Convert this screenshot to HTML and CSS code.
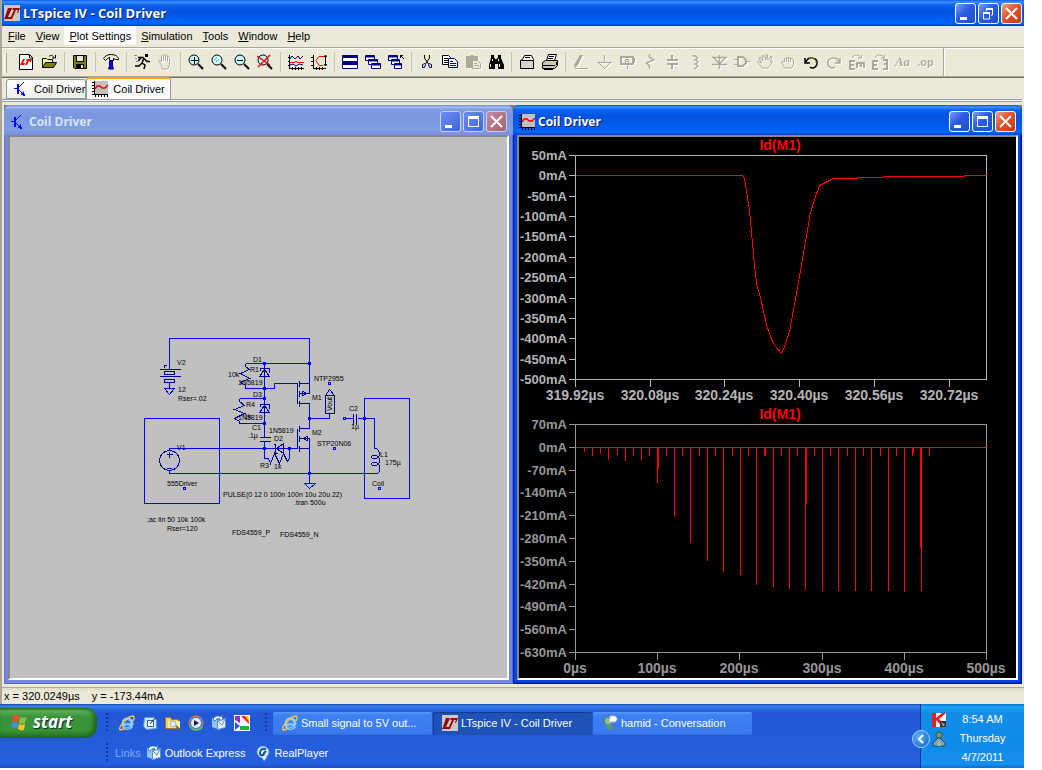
FILE: index.html
```html
<!DOCTYPE html>
<html lang="en">
<head>
    <meta charset="UTF-8">
    <meta name="viewport" content="width=device-width, initial-scale=1.0">
    <title>LTspice IV - Coil Driver</title>
    <link rel="stylesheet" href="styles.css">
</head>
<body>

    <!-- shared icons -->
    <svg class="defs" width="0" height="0">
        <symbol id="lt" viewBox="0 0 16 16">
            <path fill="#c8c8c8" d="M0 0h16v16H0z"/>
            <path fill="#900" d="M4 3h4L4 12h3l-1 2H0l1-2zM9 3h7l-2 5h-1l1-3h-2L8 14H6l4-9H8z"/>
        </symbol>
        <symbol id="bjt" viewBox="0 0 16 16">
            <path fill="none" stroke="#00f" d="M1 7.500h4M11 1L6 6M6 9l5 5"/>
            <path fill="#00f" d="M4 3h2v10H4zM8 13l3-3v4h-3zM10 13h2v2h-2z"/>
        </symbol>
        <symbol id="plot" viewBox="0 0 16 16">
            <path fill="#c0c0c0" d="M3 0h13v13H3z"/>
            <path stroke="#000" d="M2.500 0v14M2 13.500h14M0 1.500h2M0 4.500h2M0 7.500h2M0 10.500h2M0 13.500h2M3.500 14v2M6.500 14v2M9.500 14v2M12.500 14v2M15.500 14v2"/>
            <path fill="none" stroke="red" stroke-width="1.500" d="M3 8l2-3h3l2 2h3l3-3"/>
        </symbol>
        <symbol id="ie" viewBox="0 0 16 16">
            <path fill="none" stroke="#8fd0ff" stroke-width="3" d="M4 9h9c0-7-9-7-9 0 0 5 6 6 9 2"/>
            <path fill="none" stroke="#2a8be8" d="M5 8h7M5 11c2 3 5 3 7 1"/>
            <path fill="none" stroke="#f5c53a" stroke-width="1.500" d="M1 15C-1 12 8 1 14 1c2 1 1 3 0 5M1 15c2 0 4-1 5-2"/>
        </symbol>
        <symbol id="mail" viewBox="0 0 16 16">
            <path fill="#8ec5f5" d="M1 3l8 2v10l-8-3z"/>
            <path fill="#e8f3fd" stroke="#5b8fc8" d="M6.500 5.500l8-2v9l-8 2z"/>
            <path fill="none" stroke="#5b8fc8" d="M7 6l4 4 3-6"/>
            <path fill="#fff" stroke="#3d7bc4" d="M2 5c1-4 5-5 8-3l1-2 1 5H8l1-1c-2-1-4 0-5 2z"/>
        </symbol>
        <symbol id="win-min" viewBox="0 0 21 21"><path fill="#fff" d="M5 14h7v3H5z"/></symbol>
        <symbol id="win-max" viewBox="0 0 21 21"><path fill="#fff" d="M5 5h11v11H5zM6 8v7h9V8z" fill-rule="evenodd"/></symbol>
        <symbol id="win-restore" viewBox="0 0 21 21">
            <path fill="none" stroke="#fff" d="M8.500 8V6M8 6.500h7M14.500 6v6H13M5 10.500h7M5.500 9v7h6V9"/>
            <path fill="#fff" d="M8 5h7v2H8zM5 9h7v2H5z"/>
        </symbol>
        <symbol id="win-close" viewBox="0 0 21 21"><path stroke="#fff" stroke-width="2" d="M5 5l11 11M16 5L5 16"/></symbol>
    </svg>

    <div class="app">
        <header class="titlebar">
            <svg class="icon"><use href="#lt"/></svg>
            <h1>LTspice IV - Coil Driver</h1>
            <button class="ctl" aria-label="Minimize"><svg><use href="#win-min"/></svg></button>
            <button class="ctl" aria-label="Restore"><svg><use href="#win-restore"/></svg></button>
            <button class="ctl close" aria-label="Close"><svg><use href="#win-close"/></svg></button>
        </header>

        <nav class="menu">
            <button><u>F</u>ile</button>
            <button><u>V</u>iew</button>
            <button class="hot"><u>P</u>lot Settings</button>
            <button><u>S</u>imulation</button>
            <button><u>T</u>ools</button>
            <button><u>W</u>indow</button>
            <button><u>H</u>elp</button>
        </nav>

        <div class="toolbar">
            <button aria-label="New"><svg viewBox="0 0 16 16"><path fill="#fff" stroke="#000" d="M1.500 .5h10l3 3v12h-13z"/><path fill="none" stroke="#000" d="M11.500 1v3h3"/><path fill="red" d="M5 5h2l-2 4h2l-1 2H2zM9 5h5l-1 3h-1l0-1h-1l-2 4H7l2-4H8z"/></svg></button>
            <button aria-label="Open"><svg viewBox="0 0 16 16"><path fill="#ffff80" stroke="#000" d="M1.500 13.500v-9h4l1 1h5v3"/><path fill="#808000" stroke="#000" d="M1.500 13.500l3-5h11l-3 5z"/><path fill="none" stroke="#000" d="M8 2.500c2-2 4-1 5 1M14.500 1v3H11"/></svg></button>
            <span class="sep"></span>
            <button aria-label="Save"><svg viewBox="0 0 16 16"><path fill="#808000" stroke="#000" d="M1.500 1.500h13v13h-12l-1-1z"/><path fill="#ece9d8" stroke="#000" d="M4.500 1.500h7v6h-7z"/><path d="M4 10h8v5H4z"/><path fill="#ece9d8" d="M9 11h2v3H9z"/></svg></button>
            <span class="sep"></span>
            <button aria-label="Control Panel"><svg viewBox="0 0 16 16"><path fill="#ece9d8" stroke="#000" d="M.5 4.500c2-3 4-4 8-4 4 0 6 2 7 4v1h-3l-2-1v2h-4v-3l-2 1-2 2z"/><path fill="#00f" stroke="#000080" d="M6.500 7v5l-1 3h5l-1-3V7z"/></svg></button>
            <span class="sep"></span>
            <button aria-label="Run"><svg viewBox="0 0 16 16"><path d="M11 0h3v3h-3z"/><path fill="none" stroke="#000" stroke-width="1.500" d="M4 3.500h5l2 2 2 2h3M10 4L8 9l3 2-1 4M8 9l-3 3H1M7 4L4 7"/><path stroke="#888" d="M0 1.500h3M1 4.500h2M2 7.500h2"/></svg></button>
            <button class="off" aria-label="Halt"><svg viewBox="0 0 16 16"><path d="M4.500 11L1.500 7l1-1 2 2V2.500l1-1 1 1V7 1.500l1-1 1 1V7 1.500l1-1 1 1V8 3.500l1-1 1 1V11l-2 4h-5z"/></svg></button>
            <span class="sep"></span>
            <button aria-label="Zoom to rectangle"><svg viewBox="0 0 16 16"><circle cx="6" cy="6" r="5" fill="#bff" stroke="#000"/><path stroke="#000" d="M3 6.500h7M6.500 3v7"/><path stroke="#000" stroke-width="2" d="M10 10l5 5"/></svg></button>
            <button aria-label="Pan"><svg viewBox="0 0 16 16"><circle cx="6" cy="6" r="5" fill="#dff" stroke="#000"/><path fill="none" stroke="#0cc" d="M3 6l3-3M5 8l3-3"/><path stroke="#000" stroke-width="2" d="M10 10l5 5"/></svg></button>
            <button aria-label="Zoom back"><svg viewBox="0 0 16 16"><circle cx="6" cy="6" r="5" fill="#bff" stroke="#000"/><path stroke="#000" d="M3 6.500h6"/><path stroke="#000" stroke-width="2" d="M10 10l5 5"/></svg></button>
            <button aria-label="Zoom full extents"><svg viewBox="0 0 16 16"><circle cx="6" cy="6" r="5" fill="#bff" stroke="#000"/><path stroke="#000" stroke-width="2" d="M10 10l5 5"/><path stroke="red" stroke-width="1.500" d="M0 2l13 9M13 1L1 13"/></svg></button>
            <span class="sep"></span>
            <button aria-label="Autorange"><svg viewBox="0 0 16 16"><path fill="none" stroke="#000" d="M1.500 1v14M0 3.500h2M0 7.500h2M0 11.500h2M1 14.500h15M4.500 13v3M7.500 13v3M10.500 13v3M13.500 13v3"/><path fill="none" stroke="#000080" d="M2 5l2-3 3 3 3-3 2 3 3-3"/><path fill="none" stroke="red" d="M2 8.500h4l2-1 2 1h6"/><path fill="none" stroke="#008" d="M2 11l3-1 3 2 3-2 4 1"/></svg></button>
            <button aria-label="Plot limits"><svg viewBox="0 0 16 16"><path fill="none" stroke="#000" d="M2.500 1v14M0 3.500h2M0 7.500h2M0 11.500h2M2 14.500h13M5.500 13v3M8.500 13v3M11.500 13v3M14.500 2v9M13 3l1.500-2L16 3M13 10l1.500 2 1.500-2"/><path fill="none" stroke="red" d="M13 2.500H8l-3 4 3 5h4"/></svg></button>
            <span class="sep"></span>
            <button aria-label="Tile windows"><svg viewBox="0 0 16 16"><path fill="#fff" stroke="#000080" d="M.5 1.500h15v6H.5zM.5 9.500h15v5H.5z"/><path fill="#000080" d="M0 1h16v3H0zM0 8h16v3H0z"/></svg></button>
            <button aria-label="Cascade windows"><svg viewBox="0 0 16 16"><g fill="#fff" stroke="#000080"><path d="M.5 1.500h9v5h-9zM3.500 5.500h9v5h-9zM6.500 9.500h9v5h-9z"/><path fill="#000080" d="M1 2h8v1H1zM4 6h8v1H4zM7 10h8v1H7z"/></g></svg></button>
            <button aria-label="Close windows"><svg viewBox="0 0 16 16"><g fill="#fff" stroke="#000080"><path d="M.5 1.500h9v5h-9zM3.500 5.500h8v5h-8zM6.500 9.500h7v5h-7z"/><path fill="#000080" d="M1 2h8v1H1zM4 6h7v1H4zM7 10h6v1H7z"/></g><path fill="none" stroke="#000" d="M12 1.500h3M12.500 1v3M12 1l4 4"/></svg></button>
            <span class="sep"></span>
            <button aria-label="Cut"><svg viewBox="0 0 16 16"><path fill="none" stroke="#000" d="M5.500 1v3l4 6M10.500 1v3l-4 6"/><path fill="none" stroke="#000080" d="M6 9.500l-2.500 1v3h2l1-3zM10 9.500l2.500 1v3h-2l-1-3z"/></svg></button>
            <button aria-label="Copy"><svg viewBox="0 0 16 16"><path fill="#fff" stroke="#000" d="M.5 1.500h6l2 2v7h-8z"/><path stroke="#000" d="M2 4.500h4M2 6.500h4M2 8.500h4"/><path fill="#fff" stroke="#000080" d="M6.500 4.500h6l3 3v6h-9z"/><path stroke="#000080" d="M8 7.500h3M8 9.500h6M8 11.500h6"/></svg></button>
            <button class="off" aria-label="Paste"><svg viewBox="0 0 16 16"><path class="fill" d="M1 2h4l1-1h2l1 1h4v12H1z"/><path fill="#ece9d8" d="M7.500 6.500h5l3 3v5h-8zM9 9.500h3M9 11.500h5"/></svg></button>
            <button aria-label="Find"><svg viewBox="0 0 16 16"><path d="M3 1h3v2l1 2h2l1-2V1h3v3l3 7v4h-6v-5H7v5H1v-4l2-7z"/><path stroke="#fff" d="M4.500 5v2M2.500 10v3M10.500 5v2M11.500 10v3"/></svg></button>
            <span class="sep"></span>
            <button aria-label="Print preview"><svg viewBox="0 0 16 16"><path fill="#fff" stroke="#000" d="M1.500 6.500l2-1 2-4h7l2 4v9h-13z"/><path fill="#d4d4cc" stroke="#000" d="M1.500 6.500h13v8h-13z"/><path stroke="#000" d="M6 3.500h5"/></svg></button>
            <button aria-label="Print"><svg viewBox="0 0 16 16"><path fill="#fff" stroke="#000" d="M4.500 6.500l2-6h8l-2 6z"/><path fill="#c8c8c0" stroke="#000" d="M.5 8.500l3-2h12v5l-3 3H.5z"/><path stroke="#000" d="M7 2.500h5M6 4.500h5M1 11.500h12M2 15.500h9M14.500 8v3"/><path fill="#dd0" d="M8 9h3v1H8z"/></svg></button>
            <span class="sep"></span>
            <button class="off" aria-label="Wire"><svg viewBox="0 0 16 16"><path class="fill" d="M7 1h3L5 11l-3 3-1-3zM2 14h13v1H2z"/></svg></button>
            <button class="off" aria-label="Ground"><svg viewBox="0 0 16 16"><path d="M8.500 1v7M1 8.500h15M3 9l5.500 5.500L14 9"/></svg></button>
            <button class="off" aria-label="Label net"><svg viewBox="0 0 16 16"><path stroke-width="2" d="M2 3h12v7H2z"/><path d="M1.500 4v5M15.500 4v5M8.500 11v4M6.500 9V5.500h3V9M7 7.500h3"/></svg></button>
            <button class="off" aria-label="Resistor"><svg viewBox="0 0 16 16"><path stroke-width="1.500" d="M7.500 0v3l4 3-7 3 3 3v3"/></svg></button>
            <button class="off" aria-label="Capacitor"><svg viewBox="0 0 16 16"><path stroke-width="2" d="M7 1v5M7 10v5M2 6h11M2 10h11"/></svg></button>
            <button class="off" aria-label="Inductor"><svg viewBox="0 0 16 16"><path stroke-width="1.500" d="M5.500 1v1h2l2 2-2 2H6h2l2 2-2 2H6h2l2 2-2 2-2 1"/></svg></button>
            <button class="off" aria-label="Diode"><svg viewBox="0 0 16 16"><path stroke-width="1.500" d="M8.500 1v14M1 3.500h15M3 4l5.500 6L14 4M1 10.500h15"/></svg></button>
            <button class="off" aria-label="Component"><svg viewBox="0 0 16 16"><path stroke-width="2" d="M4 3h5l3 3v3l-3 3H4z"/><path d="M0 5.500h4M0 10.500h4M12 7.500h4"/></svg></button>
            <button class="off" aria-label="Move"><svg viewBox="0 0 16 16"><path d="M5.500 14L.5 8l1-1 3 2L2 4l1-1 3 4-1-5 1-1 3 5V1l1-1 1 6 3-4 1 1-2 5 2-1v2l-4 5z"/></svg></button>
            <button class="off" aria-label="Drag"><svg viewBox="0 0 16 16"><path d="M4.500 14L1.500 8l1-1 2 1V5l1-1 1 1v3V4l1-1 1 1v4V4l1-1 1 1v4V5l1-1 2 2v5l-2 3z"/></svg></button>
            <button aria-label="Undo"><svg viewBox="0 0 16 16"><path fill="none" stroke="#000" stroke-width="1.500" d="M2 4v5h5M3 8c2-6 12-5 11 2-1 4-5 5-7 3"/><path fill="none" stroke="#aa0" d="M6 5c4-2 7 1 7 4"/></svg></button>
            <button class="off" aria-label="Redo"><svg viewBox="0 0 16 16"><path stroke-width="1.500" d="M14 4v5H9M13 8C11 2 1 3 2 10c1 4 5 5 7 3"/></svg></button>
            <button class="off" aria-label="Rotate"><svg viewBox="0 0 16 16"><path d="M3 4c2-4 7-4 9 0M12.500 1v3H9"/><path stroke-width="2" d="M6 7H1v8h5M1 11h4M8 14V9h7v5M12 9v4"/></svg></button>
            <button class="off" aria-label="Mirror"><svg viewBox="0 0 16 16"><path d="M3 4c2-4 7-4 9 0M12.500 1v3H9"/><path stroke-width="2" d="M6 7H1v8h5M1 11h4M11 6h4v9h-4M12 10h3"/></svg></button>
            <button class="off aa" aria-label="Text">Aa</button>
            <button class="off op" aria-label="SPICE directive">.op</button>
            <span class="sep end"></span>
        </div>

        <div class="tabs">
            <button class="tab"><svg class="icon"><use href="#bjt"/></svg>Coil Driver</button>
            <button class="tab active"><svg class="icon"><use href="#plot"/></svg>Coil Driver</button>
        </div>

        <main class="mdi">
            <section class="window inactive">
                <header class="caption">
                    <svg class="icon"><use href="#bjt"/></svg>
                    <h2>Coil Driver</h2>
                    <button class="ctl" aria-label="Minimize"><svg><use href="#win-min"/></svg></button>
                    <button class="ctl" aria-label="Maximize"><svg><use href="#win-max"/></svg></button>
                    <button class="ctl close" aria-label="Close"><svg><use href="#win-close"/></svg></button>
                </header>
                <div class="client">
                    <svg class="schematic" viewBox="10 137 497 541" preserveAspectRatio="xMinYMin meet">
                        <g transform="translate(.5 .5)">
                            <!-- wires -->
                            <g class="wire">
                                <path d="M169 369V338H309V383M245 363H309M244 388H274V383H297M239 398H264M264 363V368M264 378V403M264 413V437M239 423H264M264 441V458M169 450V448H297M169 470V473H376M289 448V458M309 403V428M309 418H329V413M309 438V483M345 418H353M357 418H374V448"/>
                                <path d="M144 418H219V503H144ZM364 398H409V498H364Z"/>
                                <path d="M304 483H315L309 488ZM164 388H174L169 394Z"/>
                                <path d="M183 487h2v2h-2zM328 382h2v2h-2zM333 447h2v2h-2zM343 417h2v2h-2zM378 487h2v2h-2z"/>
                                <path class="dot" d="M263 362h2v2h-2zM308 362h2v2h-2zM263 387h2v2h-2zM263 397h2v2h-2zM263 422h2v2h-2zM263 447h2v2h-2zM288 447h2v2h-2zM308 417h2v2h-2zM308 472h2v2h-2zM363 417h2v2h-2z"/>
                            </g>
                            <!-- parts -->
                            <g class="part">
                                <path d="M159 369H180M164 371H174V374H164ZM159 376H180M164 379H174V382H164ZM169 382V388M163 365h3M164 364v3"/>
                                <circle cx="169" cy="460" r="10"/>
                                <path d="M166 454h6M169 451v6M166 468h5"/>
                                <path d="M245 363V366L249 369L240 373L249 378L240 382L245 385V388M239 398V401L244 405L234 409L244 413L234 418L239 421V423M264 458H268L270 463L274 453L279 463L283 453L287 461L289 458"/>
                                <path d="M264 368V378M260 370V368H269V372M264 369L259 376H269ZM264 403V413M260 406V404H269V408M264 405L259 412H269Z"/>
                                <path d="M259 437H270M259 441H270M275 444V453H277M275 444H273M276 448L283 443V453Z"/>
                                <path d="M297 383V403M299 380V386M299 390V396M299 400V406M299 383H309M309 383V393H299M299 403H309M302 391L307 393L302 395Z"/>
                                <path d="M297 428V448M299 425V431M299 435V441M299 445V451M299 428H309M299 438H309M299 448H309M307 436L302 438L307 440Z"/>
                                <path d="M353 413V424M356 413V424M374 448C380 448 381 458 374 458C370 458 370 455 374 455C381 455 381 465 374 465C370 465 370 462 374 462C381 462 381 473 376 473"/>
                                <path d="M325 413V395L329 389L334 395V413ZM325 395H334"/>
                            </g>
                        </g>
                        <text x="177" y="365">V2</text>
                        <text x="178" y="392">12</text>
                        <text x="178" y="401">Rser=.02</text>
                        <text x="253" y="362">D1</text>
                        <text x="250" y="372">R1</text>
                        <text x="228" y="377">10k</text>
                        <text x="238" y="385">1N5819</text>
                        <text x="253" y="397">D3</text>
                        <text x="246" y="407">R4</text>
                        <text x="244" y="419">1k</text>
                        <text x="238" y="420">1N5819</text>
                        <text x="252" y="430">C1</text>
                        <text x="248" y="438">.1µ</text>
                        <text x="269" y="433">1N5819</text>
                        <text x="274" y="441">D2</text>
                        <text x="260" y="468">R3</text>
                        <text x="274" y="469">1k</text>
                        <text x="314" y="381">NTP2955</text>
                        <text x="312" y="400">M1</text>
                        <text x="312" y="435">M2</text>
                        <text x="317" y="446">STP20N06</text>
                        <text transform="translate(332 411) rotate(-90)">Vout</text>
                        <text x="349" y="411">C2</text>
                        <text x="351" y="429">1µ</text>
                        <text x="380" y="457">L1</text>
                        <text x="385" y="465">175µ</text>
                        <text x="372" y="486">Coil</text>
                        <text x="177" y="450">V1</text>
                        <text x="167" y="486">555Driver</text>
                        <text x="223" y="497">PULSE(0 12 0 100n 100n 10u 20u 22)</text>
                        <text x="294" y="505">.tran 500u</text>
                        <text x="147" y="522">;ac lin 50 10k 100k</text>
                        <text x="167" y="531">Rser=120</text>
                        <text x="232" y="535">FDS4559_P</text>
                        <text x="280" y="537">FDS4559_N</text>
                    </svg>
                </div>
            </section>

            <section class="window">
                <header class="caption">
                    <svg class="icon"><use href="#plot"/></svg>
                    <h2>Coil Driver</h2>
                    <button class="ctl" aria-label="Minimize"><svg><use href="#win-min"/></svg></button>
                    <button class="ctl" aria-label="Maximize"><svg><use href="#win-max"/></svg></button>
                    <button class="ctl close" aria-label="Close"><svg><use href="#win-close"/></svg></button>
                </header>
                <div class="client">
                    <svg class="plots" viewBox="519 137 497 541" preserveAspectRatio="xMinYMin meet">
                        <g class="pane selected">
                            <g transform="translate(.5 .5)">
                                <path class="axis" d="M575 155H986V379H575ZM568 155h7M568 175h7M568 196h7M568 216h7M568 236h7M568 257h7M568 277h7M568 298h7M568 318h7M568 338h7M568 359h7M568 379h7M575 379v7M650 379v7M724 379v7M799 379v7M874 379v7M949 379v7"/>
                                <path class="trace" d="M575 175H742L744 178L749 210L754 265L756 283L760 297L766 325L772 341L775 346L781 353L784 346L789 331L799 276L810 212L814 199L819 185L829 180L833 178H857V177H883V176H964V175H986"/>
                            </g>
                            <text class="name" x="780" y="150">Id(M1)</text>
                            <g class="ylabels">
                                <text x="567" y="160">50mA</text>
                                <text x="567" y="180">0mA</text>
                                <text x="567" y="201">-50mA</text>
                                <text x="567" y="221">-100mA</text>
                                <text x="567" y="241">-150mA</text>
                                <text x="567" y="262">-200mA</text>
                                <text x="567" y="282">-250mA</text>
                                <text x="567" y="303">-300mA</text>
                                <text x="567" y="323">-350mA</text>
                                <text x="567" y="343">-400mA</text>
                                <text x="567" y="364">-450mA</text>
                                <text x="567" y="384">-500mA</text>
                            </g>
                            <g class="xlabels">
                                <text x="575" y="400">319.92µs</text>
                                <text x="650" y="400">320.08µs</text>
                                <text x="724" y="400">320.24µs</text>
                                <text x="799" y="400">320.40µs</text>
                                <text x="874" y="400">320.56µs</text>
                                <text x="949" y="400">320.72µs</text>
                            </g>
                        </g>
                        <g class="pane">
                            <g transform="translate(.5 .5)">
                                <path class="axis" d="M575 424H986V652H575ZM568 424h7M568 447h7M568 470h7M568 492h7M568 515h7M568 538h7M568 561h7M568 584h7M568 606h7M568 629h7M568 652h7M575 652v7M657 652v7M739 652v7M822 652v7M904 652v7M986 652v7"/>
                                <path class="trace" d="M575 447H986M584 447V451M592 446V455M600 447V453M608 446V459M617 447V454M625 446V460M633 446V455M641 446V459M649 446V455M657 446V482M658 447V468M666 446V455M674 446V516M682 446V455M690 446V542M699 446V455M707 446V560M715 446V455M723 446V571M732 446V455M740 446V574M748 446V455M756 446V584M764 446V455M765 447V455M773 446V586M781 446V455M789 446V588M797 446V455M805 446V589M806 447V503M814 446V455M822 446V590M830 446V455M838 446V590M847 446V455M855 446V590M863 446V455M871 446V590M880 446V455M888 446V590M896 446V455M904 446V591M912 446V455M913 447V453M920 446V547M921 447V590M929 446V455"/>
                            </g>
                            <text class="name" x="780" y="419">Id(M1)</text>
                            <g class="ylabels">
                                <text x="567" y="429">70mA</text>
                                <text x="567" y="452">0mA</text>
                                <text x="567" y="475">-70mA</text>
                                <text x="567" y="497">-140mA</text>
                                <text x="567" y="520">-210mA</text>
                                <text x="567" y="543">-280mA</text>
                                <text x="567" y="566">-350mA</text>
                                <text x="567" y="589">-420mA</text>
                                <text x="567" y="611">-490mA</text>
                                <text x="567" y="634">-560mA</text>
                                <text x="567" y="657">-630mA</text>
                            </g>
                            <g class="xlabels">
                                <text x="575" y="673">0µs</text>
                                <text x="657" y="673">100µs</text>
                                <text x="739" y="673">200µs</text>
                                <text x="822" y="673">300µs</text>
                                <text x="904" y="673">400µs</text>
                                <text x="986" y="673">500µs</text>
                            </g>
                        </g>
                    </svg>
                </div>
            </section>
        </main>

        <footer class="status">
            <span>x = 320.0249µs</span>
            <span>y = -173.44mA</span>
        </footer>
    </div>

    <div class="taskbar">
        <button class="start">
            <svg viewBox="0 0 18 18"><path fill="#e8502a" d="M3 3c2-2 4-1 6 0L8 9C6 8 4 8 2 9z"/><path fill="#7fc143" d="M10 4c2 1 4 1 7 0l-2 6c-2 1-4 1-6 0z"/><path fill="#4a8be8" d="M2 10c2-1 4-1 6 0l-1 6c-2-2-4-2-6-1z"/><path fill="#fcc526" d="M9 11c2 1 4 1 6 0l-1 6c-2 1-4 0-6-1z"/></svg>
            start
        </button>
        <div class="bands">
            <div class="row">
                <span class="grip"></span>
                <div class="quick">
                    <a href="#" aria-label="Internet Explorer"><svg class="icon"><use href="#ie"/></svg></a>
                    <a href="#" aria-label="Show Desktop"><svg class="icon" viewBox="0 0 16 16"><path fill="#cfe6fa" stroke="#4a9be0" d="M2.500 2.500h10l2 3v8l-10 1-3-3z"/><path fill="#fff" stroke="#2468b0" d="M5.500 5.500h6v6h-6z"/><path stroke="#222" d="M8 9l6-7"/></svg></a>
                    <a href="#" aria-label="Windows Explorer"><svg class="icon" viewBox="0 0 16 16"><path fill="#f5cf62" stroke="#a8781a" d="M.5 2.500h5l1 2h7v9H.5z"/><path fill="#fbe9a8" d="M3 6h12v7H3z"/><circle cx="8" cy="9" r="3" fill="#def" stroke="#9ab"/><path stroke="#765" stroke-width="2" d="M11 11l4 4"/></svg></a>
                    <a href="#" aria-label="Media Player"><svg class="icon" viewBox="0 0 16 16"><circle cx="8" cy="8" r="7" fill="#3f7fe0" stroke="#f08030"/><path fill="none" stroke="#58c050" stroke-width="2" d="M2 11c2 5 9 5 12 1"/><circle cx="8" cy="8" r="5" fill="#eef"/><path fill="#124" d="M6 5l5 3-5 3z"/></svg></a>
                    <a href="#" aria-label="Outlook Express"><svg class="icon"><use href="#mail"/></svg></a>
                    <a href="#" aria-label="Picasa"><svg class="icon" viewBox="0 0 16 16"><path fill="#fff" d="M0 0h16v16H0z"/><path fill="#83c" d="M1 1h5v7L1 5z"/><path fill="#e22" d="M7 1l8 8V5l-4-4z"/><path fill="#fc0" d="M11 1h4v6z"/><path fill="#25e" d="M1 7l5 4-5 4z"/><path fill="#1b3" d="M6 11h9v4H6z"/></svg></a>
                </div>
                <span class="grip"></span>
                <button class="task"><svg class="icon"><use href="#ie"/></svg>Small signal to 5V out...</button>
                <button class="task pressed"><svg class="icon"><use href="#lt"/></svg>LTspice IV - Coil Driver</button>
                <button class="task"><svg class="icon" viewBox="0 0 16 16"><circle cx="6" cy="6" r="4" fill="#8fc08a" stroke="#476"/><path fill="#5b9a7a" d="M4 9h5l5 6H7c-2-1-3-3-3-6z"/><path fill="#4b78b8" d="M9 10l5 5h-4z"/><path fill="#fff" stroke="#abc" d="M8 1h5l2 2v2l-2 2H9L7 8z"/></svg>hamid - Conversation</button>
            </div>
            <div class="row links">
                <span class="grip"></span>
                <span class="label">Links</span>
                <a href="#"><svg class="icon"><use href="#mail"/></svg>Outlook Express</a>
                <a href="#"><svg class="icon" viewBox="0 0 16 16"><circle cx="8" cy="7" r="6" fill="#d8ecfa" stroke="#5b9bd0"/><path fill="none" stroke="#14549a" stroke-width="2" d="M11 4c-4-1-6 1-6 4s4 3 4 0l2-2"/><path fill="#e6f2fc" d="M7 12h5l-3 4z"/></svg>RealPlayer</a>
            </div>
        </div>
        <div class="tray">
            <button class="expand" aria-label="Show hidden icons"><svg viewBox="0 0 18 18"><path fill="none" stroke="#fff" stroke-width="2" d="M11 5L7 9l4 4"/></svg></button>
            <div class="tray-icons">
                <svg class="icon" viewBox="0 0 16 16"><path fill="#f4f4f4" d="M1 1h14v14H1z"/><path fill="#d22" d="M1 1h4v5l6-5h4L8 7l4 4-3 1-4-4v7H1z"/><path fill="#333" d="M9 9h6v6H9z"/><path fill="#bbb" d="M10 10l4 3-2 1z"/></svg>
                <svg class="icon" viewBox="0 0 16 16"><circle cx="8" cy="4" r="3" fill="#7a9a6a" stroke="#354"/><path fill="#7d9fc0" stroke="#345" d="M7 7h2l5 5v3H2v-3z"/><path fill="#9c8" d="M8 8l2 7H6z"/></svg>
            </div>
            <div class="clock">
                <span>8:54 AM</span>
                <span>Thursday</span>
                <span>4/7/2011</span>
            </div>
        </div>
    </div>

</body>
</html>
```
FILE: styles.css
```css
* {
    box-sizing: border-box;
}

body {
    margin: 0;
    padding: 0 18px 2px 0;
    height: 100vh;
    display: flex;
    flex-direction: column;
    background: #fff;
    color: #000;
    font-family: "Liberation Sans", Arial, sans-serif;
    font-size: 11px;
    line-height: 14px;
}

button {
    margin: 0;
    padding: 0;
    border: 0;
    background: none;
    color: inherit;
    font: inherit;
}

a {
    color: inherit;
    text-decoration: none;
}

h1, h2 {
    flex: 1;
    margin: 0;
    font-family: "Open Sans", "Noto Sans", sans-serif;
    font-size: 12px;
    line-height: 16px;
    font-weight: bold;
    color: #fff;
    text-shadow: 1px 1px 0 #0a246a;
}

h1 {
    font-size: 13px;
}

svg {
    display: block;
}

.defs {
    position: absolute;
}

.icon {
    width: 16px;
    height: 16px;
    flex: none;
}

/* main window */
.app {
    flex: 1;
    min-height: 0;
    display: flex;
    flex-direction: column;
    padding-left: 2px;
    background: #ece9d8;
    box-shadow: inset 2px 0 0 #aca899;
}

.titlebar {
    height: 26px;
    display: flex;
    align-items: center;
    gap: 2px;
    padding: 0 2px;
    background: linear-gradient(#0a5cf0 0, #3b93ff 2px, #0a63ee 5px, #0053e0 10px, #0057e7 16px, #0066ff 23px, #003dd0 26px);
}

.titlebar h1 {
    padding-left: 1px;
}

.ctl {
    width: 21px;
    height: 21px;
    border: 1px solid #fff;
    border-radius: 3px;
    background: linear-gradient(135deg, #7d9bf2, #2a5be0 45%, #1c4fd0);
}

.ctl svg {
    width: 21px;
    height: 21px;
    margin: -1px;
}

.close {
    background: linear-gradient(135deg, #f0a088, #e0522c 45%, #c83a10);
}

.menu {
    height: 22px;
    display: flex;
    align-items: stretch;
    padding: 0 0 2px 1px;
    border-bottom: 1px solid #aca899;
    box-shadow: 0 1px 0 #fff;
}

.menu button {
    padding: 0 5px;
}

.menu .hot {
    background: #fff;
}

.toolbar {
    height: 30px;
    display: flex;
    align-items: center;
    padding: 2px 0 3px 12px;
    border-bottom: 1px solid #716f64;
    box-shadow: inset 0 -1px 0 #aca899;
    background: linear-gradient(#fff, #fff) 2px 5px / 1px 20px no-repeat, linear-gradient(#aca899, #aca899) 4px 5px / 1px 20px no-repeat;
}

.toolbar button {
    width: 23px;
    height: 22px;
    display: flex;
    align-items: center;
    justify-content: center;
    flex: none;
}

.toolbar svg {
    width: 16px;
    height: 16px;
}

.toolbar .sep {
    width: 8px;
    height: 20px;
    background: linear-gradient(#c5c2b0, #c5c2b0) 4px 0 / 1px 100% no-repeat;
}

.toolbar .end {
    height: 28px;
    margin-left: 2px;
    background: linear-gradient(#aca899, #aca899) 4px 0 / 1px 100% no-repeat, linear-gradient(#fff, #fff) 5px 0 / 1px 100% no-repeat;
}

.toolbar .off {
    color: #aca899;
    filter: drop-shadow(1px 1px 0 #fff);
}

.off svg {
    fill: none;
    stroke: #aca899;
}

.off .fill {
    fill: #aca899;
    stroke: none;
}

.toolbar .aa {
    font: italic bold 13px "Liberation Serif", serif;
}

.toolbar .op {
    font-weight: bold;
}

.tabs {
    height: 24px;
    margin-right: 2px;
    display: flex;
    align-items: flex-end;
    padding: 0 0 2px 4px;
    border-bottom: 1px solid #919b9c;
    background: linear-gradient(#919b9c, #919b9c) 0 21px / 100% 1px no-repeat, linear-gradient(#fff, #fff) 0 22px / 100% 1px no-repeat;
}

.tab {
    height: 20px;
    display: flex;
    align-items: center;
    gap: 5px;
    padding: 0 0 0 6px;
    border: 1px solid #919b9c;
    border-radius: 3px 3px 0 0;
    background: linear-gradient(#fff, #f0f0ea);
}

.tab.active {
    height: 22px;
    padding: 0 5px;
    border-top: 2px solid #ffa21b;
    border-bottom: 0;
    background: #fcfcfe;
}

/* child windows */
.mdi {
    flex: 1;
    min-height: 0;
    margin: 3px 2px 0 2px;
    display: grid;
    grid-template-columns: 1fr 1fr;
    background: #808080;
}

.window {
    min-width: 0;
    min-height: 0;
    display: flex;
    flex-direction: column;
    padding: 0 4px 4px;
    border-radius: 7px 7px 0 0;
    background: #0046e8;
    box-shadow: inset 1px 0 0 #0019cf, inset -1px -1px 0 #00138c, inset -2px -2px 0 #0030c0;
}

.window.inactive {
    background: #7484e0;
    box-shadow: inset 1px 0 0 #6675cc, inset -1px -1px 0 #5a68c0;
}

.caption {
    height: 30px;
    margin: 0 -4px;
    padding: 3px 6px 0;
    display: flex;
    align-items: center;
    gap: 2px;
    border-radius: 7px 7px 0 0;
    background: linear-gradient(#0a4fe0 0, #3b93ff 2px, #0a63ee 5px, #0053e0 11px, #0057e7 18px, #0066ff 27px, #0043cf 30px);
}

.caption h2 {
    padding-left: 1px;
}

.inactive .caption {
    background: linear-gradient(#6f86d8 0, #a5bdf2 2px, #8098e0 5px, #7a96df 12px, #7f9ee6 24px, #7a8fe0 30px);
}

.inactive h2 {
    color: #d8e4f8;
    text-shadow: none;
}

.inactive .ctl {
    border-color: #c5d2f5;
    background: linear-gradient(135deg, #6d8df0, #3f66dc);
}

.inactive .close {
    background: linear-gradient(135deg, #c08a9c, #a8606e);
}

.client {
    flex: 1;
    min-height: 0;
    border: 2px solid;
    border-color: #8a887c #fff #fff #8a887c;
    background: #000;
}

.inactive .client {
    background: #c0c0c0;
}

.client svg {
    width: 100%;
    height: 100%;
}

/* schematic */
.schematic {
    fill: none;
    shape-rendering: crispEdges;
}

.schematic text {
    font-size: 7px;
    fill: #000;
    stroke: none;
}

.wire {
    stroke: #00f;
}

.part {
    stroke: #000096;
}

.wire .dot {
    fill: #00f;
}

/* waveforms */
.plots {
    shape-rendering: crispEdges;
}

.plots text {
    font-size: 14px;
    font-weight: bold;
}

.pane {
    fill: #969696;
    stroke: none;
}

.pane.selected {
    fill: #b4b4b4;
}

.axis {
    fill: none;
    stroke: #969696;
}

.selected .axis {
    stroke: #b4b4b4;
}

.trace {
    fill: none;
    stroke: #f00;
}

.plots .ylabels text {
    font-size: 13px;
    text-anchor: end;
}

.xlabels,
.name {
    text-anchor: middle;
}

.plots .name {
    fill: #f00;
}

.status {
    height: 17px;
    margin-top: 3px;
    padding: 1px 2px;
    display: flex;
    gap: 12px;
    border-top: 1px solid #aca899;
    background: linear-gradient(#dedbc8, #ece9d8 4px);
}

/* taskbar */
.taskbar {
    height: 64px;
    display: flex;
    color: #fff;
    background: linear-gradient(#1941a5 0, #3a81ee 2px, #2c6be2 5px, #2257d5 9px, #245ddb 40px, #2660e0 60px, #1c4bc0 64px);
}

.start {
    width: 97px;
    height: 30px;
    margin-top: 4px;
    padding: 0 0 2px 10px;
    display: flex;
    align-items: center;
    gap: 5px;
    border-radius: 0 10px 12px 0;
    background: linear-gradient(#2b6e2b, #5aae58 3px, #3c923c 9px, #379637 22px, #2a742a);
    box-shadow: inset -3px -1px 5px #1f5c1f;
    font-family: "Open Sans", sans-serif;
    font-size: 17px;
    font-weight: bold;
    font-style: italic;
    text-shadow: 1px 1px 1px #123;
}

.start svg {
    width: 18px;
    height: 18px;
}

.bands {
    flex: 1;
    min-width: 0;
    padding: 4px 0 0 9px;
}

.row {
    height: 30px;
    display: flex;
    align-items: center;
}

.grip {
    width: 4px;
    height: 20px;
    background: radial-gradient(circle at 1px 1px, #123c9e 1px, transparent 1px) 0 0 / 4px 4px;
}

.quick {
    display: flex;
    gap: 7px;
    margin: 0 15px 0 9px;
}

.task {
    flex: 0 1 159px;
    height: 23px;
    margin-left: 1px;
    padding: 0 9px;
    display: flex;
    align-items: center;
    gap: 3px;
    border-radius: 2px;
    background: linear-gradient(#5a97f8, #3c81f3 3px, #3a7bf0 20px, #3270e0);
    white-space: nowrap;
}

.grip + .task {
    margin-left: 4px;
}

.task.pressed {
    background: #1e52b7;
    box-shadow: inset 1px 1px 1px #123a8c;
}

.links .label {
    margin: 0 5px;
    color: #7eaaf0;
}

.links a {
    display: flex;
    align-items: center;
    gap: 3px;
    margin-right: 10px;
}

.tray {
    position: relative;
    width: 104px;
    display: flex;
    padding-left: 10px;
    border-left: 1px solid #0a3a90;
    background: linear-gradient(#0d6fd0 0, #1aa4f0 3px, #128ee9 8px, #0f8ae8 40px, #1590ee 60px, #0d6fd0 64px);
}

.expand {
    position: absolute;
    left: -9px;
    top: 26px;
    width: 18px;
    height: 18px;
    border-radius: 9px;
    border: 1px solid #a8d4f8;
    background: radial-gradient(circle at 6px 6px, #5cb0f4, #0c5fc8);
}

.expand svg {
    width: 18px;
    height: 18px;
    margin: -1px;
}

.tray-icons {
    display: flex;
    flex-direction: column;
    gap: 3px;
    padding-top: 8px;
}

.clock {
    flex: 1;
    padding: 6px 14px 0 8px;
    display: flex;
    flex-direction: column;
    text-align: center;
    line-height: 19px;
}
```
